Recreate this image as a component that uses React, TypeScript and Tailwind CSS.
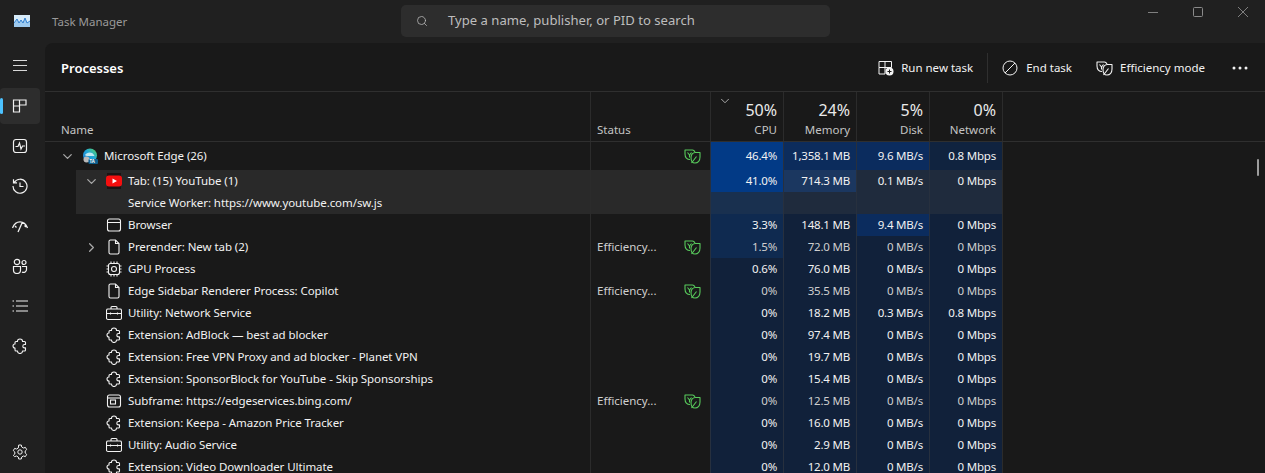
import { Search, ChevronDown, ChevronRight } from 'lucide-react'

const font = '[font-family:"Noto_Sans",sans-serif]'

type Cell = { v: string; bg: string }
type RowData = {
  name: string
  level: number
  icon: string
  chevron?: 'down' | 'right'
  status?: string
  leaf?: boolean
  hover?: boolean
  dim?: boolean
  tall?: boolean
  cells: Cell[]
}

const base = 'bg-[#11213a]'
const hoverBase = 'bg-[#1f2b3d]'

const rows: RowData[] = [
  { name: 'Microsoft Edge (26)', level: 0, icon: 'edge', chevron: 'down', leaf: true, tall: true, cells: [
    { v: '46.4%', bg: 'bg-[#023a86]' }, { v: '1,358.1 MB', bg: 'bg-[#0c2c5c]' }, { v: '9.6 MB/s', bg: 'bg-[#0b2c5e]' }, { v: '0.8 Mbps', bg: 'bg-[#10233f]' },
  ] },
  { name: 'Tab: (15) YouTube (1)', level: 1, icon: 'youtube', chevron: 'down', hover: true, cells: [
    { v: '41.0%', bg: 'bg-[#023a86]' }, { v: '714.3 MB', bg: 'bg-[#1b3760]' }, { v: '0.1 MB/s', bg: hoverBase }, { v: '0 Mbps', bg: hoverBase },
  ] },
  { name: 'Service Worker: https://www.youtube.com/sw.js', level: 2, icon: '', hover: true, cells: [
    { v: '', bg: 'bg-[#19304f]' }, { v: '', bg: hoverBase }, { v: '', bg: hoverBase }, { v: '', bg: hoverBase },
  ] },
  { name: 'Browser', level: 2, icon: 'window', cells: [
    { v: '3.3%', bg: 'bg-[#0f2a50]' }, { v: '148.1 MB', bg: base }, { v: '9.4 MB/s', bg: 'bg-[#0b2c5e]' }, { v: '0 Mbps', bg: base },
  ] },
  { name: 'Prerender: New tab (2)', level: 2, icon: 'file', chevron: 'right', status: 'Efficiency...', leaf: true, dim: true, cells: [
    { v: '1.5%', bg: 'bg-[#0f2a50]' }, { v: '72.0 MB', bg: base }, { v: '0 MB/s', bg: base }, { v: '0 Mbps', bg: base },
  ] },
  { name: 'GPU Process', level: 2, icon: 'chip', cells: [
    { v: '0.6%', bg: base }, { v: '76.0 MB', bg: base }, { v: '0 MB/s', bg: base }, { v: '0 Mbps', bg: base },
  ] },
  { name: 'Edge Sidebar Renderer Process: Copilot', level: 2, icon: 'file', status: 'Efficiency...', leaf: true, dim: true, cells: [
    { v: '0%', bg: base }, { v: '35.5 MB', bg: base }, { v: '0 MB/s', bg: base }, { v: '0 Mbps', bg: base },
  ] },
  { name: 'Utility: Network Service', level: 2, icon: 'case', cells: [
    { v: '0%', bg: base }, { v: '18.2 MB', bg: base }, { v: '0.3 MB/s', bg: base }, { v: '0.8 Mbps', bg: base },
  ] },
  { name: 'Extension: AdBlock — best ad blocker', level: 2, icon: 'puzzle', cells: [
    { v: '0%', bg: base }, { v: '97.4 MB', bg: base }, { v: '0 MB/s', bg: base }, { v: '0 Mbps', bg: base },
  ] },
  { name: 'Extension: Free VPN Proxy and ad blocker - Planet VPN', level: 2, icon: 'puzzle', cells: [
    { v: '0%', bg: base }, { v: '19.7 MB', bg: base }, { v: '0 MB/s', bg: base }, { v: '0 Mbps', bg: base },
  ] },
  { name: 'Extension: SponsorBlock for YouTube - Skip Sponsorships', level: 2, icon: 'puzzle', cells: [
    { v: '0%', bg: base }, { v: '15.4 MB', bg: base }, { v: '0 MB/s', bg: base }, { v: '0 Mbps', bg: base },
  ] },
  { name: 'Subframe: https://edgeservices.bing.com/', level: 2, icon: 'frame', status: 'Efficiency...', leaf: true, dim: true, cells: [
    { v: '0%', bg: base }, { v: '12.5 MB', bg: base }, { v: '0 MB/s', bg: base }, { v: '0 Mbps', bg: base },
  ] },
  { name: 'Extension: Keepa - Amazon Price Tracker', level: 2, icon: 'puzzle', cells: [
    { v: '0%', bg: base }, { v: '16.0 MB', bg: base }, { v: '0 MB/s', bg: base }, { v: '0 Mbps', bg: base },
  ] },
  { name: 'Utility: Audio Service', level: 2, icon: 'case', cells: [
    { v: '0%', bg: base }, { v: '2.9 MB', bg: base }, { v: '0 MB/s', bg: base }, { v: '0 Mbps', bg: base },
  ] },
  { name: 'Extension: Video Downloader Ultimate', level: 2, icon: 'puzzle', cells: [
    { v: '0%', bg: base }, { v: '12.0 MB', bg: base }, { v: '0 MB/s', bg: base }, { v: '0 Mbps', bg: base },
  ] },
]

function Leaf({ className, stroke }: { className?: string; stroke: string }) {
  return (
    <svg viewBox="0 0 17 15" className={className} fill="none" stroke={stroke} strokeWidth="1.100" strokeLinejoin="round">
      <path d="M6 10.500C3 10.500 1 8.500 1 5V1h7.500C9.500 1 10.500 2 11 3" />
      <path d="M7 8.500C7 5.500 8.800 3.500 11.500 3.500H16V8C16 11.500 14 14 11 14 8.500 14 7 11.500 7 8.500Z" />
      <path d="M3.500 3.500 5.500 6 7.500 3.500M5.500 6V8.500M7.500 14 12.500 7.500" />
    </svg>
  )
}

function Puzzle({ className }: { className?: string }) {
  return (
    <svg viewBox="0 0 16 16" className={className} fill="none" stroke="#f2f2f2" strokeWidth="1.100" strokeLinejoin="round">
      <path d="M5.500 3.200C5.500 1.800 6.600 1 8 1s2.500.8 2.500 2.200v.3h2A1 1 0 0 1 13.500 4.500v2h-1a1.700 1.700 0 0 0 0 3.400h1V12a1 1 0 0 1-1 1h-2v.3c0 1.300-1.100 2.200-2.500 2.200s-2.500-.9-2.500-2.200V13H4a1 1 0 0 1-1-1V10C1.800 10 1 9.200 1 8s.8-2 2-2V4.500a1 1 0 0 1 1-1h1.500Z" />
    </svg>
  )
}

function RowIcon({ kind }: { kind: string }) {
  const common = { viewBox: '0 0 16 16', className: 'w-4 h-4', fill: 'none', stroke: '#f2f2f2', strokeWidth: 1.1 }
  if (kind === 'edge') {
    return (
      <svg viewBox="0 0 16 16" className="w-4 h-4">
        <defs>
          <linearGradient id="edgeg" x1="0" y1="1" x2="1" y2="0">
            <stop offset="0" stopColor="#1f6fd0" />
            <stop offset="0.55" stopColor="#1fa8d8" />
            <stop offset="1" stopColor="#5fd65a" />
          </linearGradient>
        </defs>
        <circle cx="8" cy="7.500" r="7" fill="url(#edgeg)" />
        <path d="M3 7C5 3.500 11 3.500 12.500 8H6C4.500 8 3.500 7.800 3 7Z" fill="#bfe8f0" />
        <circle cx="4.500" cy="11.500" r="3" fill="#b9b9b9" />
        <rect x="6.500" y="11" width="9.500" height="5" rx="1" fill="#0d5e8c" />
        <text x="7.600" y="15.200" fontSize="4.400" fontWeight="700" fill="#fff" fontFamily="Noto Sans">TA</text>
      </svg>
    )
  }
  if (kind === 'youtube') {
    return (
      <svg viewBox="0 0 16 16" className="w-4 h-4">
        <rect x="1" y="0" width="14" height="16" fill="#1c1414" />
        <rect x="0" y="2.500" width="16" height="11" rx="3" fill="#f50f0f" />
        <path d="M6.500 5.500v5L11 8Z" fill="#fff" />
      </svg>
    )
  }
  if (kind === 'window') {
    return (
      <svg {...common}>
        <rect x="1.500" y="2" width="13" height="12" rx="2" />
        <path d="M1.500 5.500h13" />
      </svg>
    )
  }
  if (kind === 'file') {
    return (
      <svg {...common}>
        <path d="M3 2.500A1.500 1.500 0 0 1 4.500 1h5l3.500 3.500v9A1.500 1.500 0 0 1 11.500 15h-7A1.500 1.500 0 0 1 3 13.500Z" />
        <path d="M9.500 1v3.500H13" />
      </svg>
    )
  }
  if (kind === 'chip') {
    return (
      <svg {...common}>
        <rect x="2.500" y="2.500" width="11" height="11" rx="2" />
        <circle cx="8" cy="8" r="2.500" />
        <path d="M5 .5v2M8 .5v2M11 .5v2M5 13.500v2M8 13.500v2M11 13.500v2M.5 5h2M.5 8h2M.5 11h2M13.500 5h2M13.500 8h2M13.500 11h2" />
      </svg>
    )
  }
  if (kind === 'case') {
    return (
      <svg {...common}>
        <rect x="0.500" y="4" width="15" height="10.500" rx="1.500" />
        <path d="M5 4V2.500A1 1 0 0 1 6 1.500h4a1 1 0 0 1 1 1V4M.5 8.500h15M4.500 7.500v2M11.500 7.500v2" />
      </svg>
    )
  }
  if (kind === 'frame') {
    return (
      <svg {...common}>
        <rect x="1.500" y="2" width="13" height="12" rx="2" />
        <path d="M1.500 5h13" />
        <rect x="4.500" y="7" width="5" height="4" />
      </svg>
    )
  }
  if (kind === 'puzzle') {
    return <Puzzle className="w-4 h-4" />
  }
  return <span className="w-4 h-4" />
}

function Row({ row }: { row: RowData }) {
  const cellText = row.dim ? 'text-[#cfcfcf]' : 'text-[#f2f2f2]'
  return (
    <div className={`flex ${row.tall ? 'h-[28px]' : 'h-[22px]'} text-[11.5px] text-[#f2f2f2]`}>
      <div className={`w-[545px] flex ${row.level === 0 ? 'pl-[7px]' : 'pl-[31px]'}`}>
        <div className={`flex-1 flex items-center tracking-[-0.07px] ${row.hover ? 'bg-[#292929]' : ''}`}>
          <span className="w-[30px] flex justify-center text-[#a8a8a8]">
            {row.chevron === 'down' && <ChevronDown size={15} strokeWidth={2} />}
            {row.chevron === 'right' && <ChevronRight size={15} strokeWidth={2} />}
          </span>
          <span className="w-[22px] flex shrink-0"><RowIcon kind={row.icon} /></span>
          <span className="whitespace-nowrap">{row.name}</span>
        </div>
      </div>
      <div className={`w-[120px] flex items-center justify-between pl-[6px] pr-[9px] border-l border-[#2b2b2b] ${row.hover ? 'bg-[#292929]' : ''}`}>
        <span className="text-[#cfcfcf]">{row.status}</span>
        {row.leaf && <Leaf className="w-[17px] h-[15px]" stroke="#58cb5c" />}
      </div>
      {row.cells.map((c, i) => (
        <div key={i} className={`w-[73px] flex items-center justify-end pr-[6px] tracking-[-0.2px] border-l border-[#27303e] ${c.bg} ${cellText} whitespace-nowrap`}>
          {c.v}
        </div>
      ))}
      <div className="border-l border-[#2b2b2b]" />
    </div>
  )
}

function HeadCol({ pct, label, sorted }: { pct: string; label: string; sorted?: boolean }) {
  return (
    <div className="relative w-[73px] flex flex-col items-end justify-end pr-[6px] pb-[1px] border-l border-[#2b2b2b]">
      {sorted && <ChevronDown size={14} strokeWidth={1.500} className="absolute left-[7px] top-[2px] text-[#bdbdbd]" />}
      <span className="-mb-[1px] text-[16px] leading-[22px] text-[#eaeaea]">{pct}</span>
      <span className="text-[11.5px] leading-[20px] text-[#c4c4c4]">{label}</span>
    </div>
  )
}

function SideItem({ active, children }: { active?: boolean; children: React.ReactNode }) {
  return (
    <div className={`relative h-[36px] w-[40px] flex items-center justify-center rounded-[4px] ${active ? 'bg-[#2d2d2d]' : ''}`}>
      {active && <span className="absolute left-0 top-[10px] w-[3px] h-[16px] rounded bg-[#4cc2ff]" />}
      {children}
    </div>
  )
}

const sideIcon = { viewBox: '0 0 16 16', className: 'w-4 h-4', fill: 'none', stroke: '#f2f2f2', strokeWidth: 1.200 }

export default function App() {
  return (
    <div className={`relative h-[473px] w-[1265px] overflow-hidden bg-[#202020] ${font}`}>
      {/* title bar */}
      <div className="h-[43px] flex items-start">
        <div className="w-[45px] pt-[15px] pl-[14px]">
          <svg viewBox="0 0 16 12" className="w-4 h-3 block">
            <rect width="16" height="12" fill="#d7ebf9" />
            <path d="M0 8 3 4 5 8 7 5 9 8 11 3 13 8 16 6V12H0Z" fill="#9cc9ee" />
            <path d="M0 8 3 4 5 8 7 5 9 8 11 3 13 8 16 6" fill="none" stroke="#2f7fd0" strokeWidth="1" />
          </svg>
        </div>
        <span className="w-[356px] pl-[7px] pt-[13px] text-[11.5px] leading-[18px] text-[#9a9a9a]">Task Manager</span>
        <div className="mt-[5px] w-[429px] h-[32px] rounded-[5px] bg-[#2d2d2d] flex items-center pl-[15px]">
          <Search size={12} strokeWidth={1.500} className="text-[#bdbdbd]" />
          <span className="ml-[20px] pb-[1px] text-[13.1px] text-[#bdbdbd]">Type a name, publisher, or PID to search</span>
        </div>
        <div className="ml-auto flex items-center gap-[35px] pr-[17px] pt-[7px]">
          <svg viewBox="0 0 10 10" className="w-[10px] h-[10px]" stroke="#7f7f7f"><path d="M0 5.500h10" /></svg>
          <svg viewBox="0 0 10 10" className="w-[10px] h-[10px]" fill="none" stroke="#8a8a8a"><rect x=".5" y=".5" width="9" height="9" rx="1" /></svg>
          <svg viewBox="0 0 10 10" className="w-[10px] h-[10px]" stroke="#7f7f7f"><path d="M0 0 10 10M10 0 0 10" /></svg>
        </div>
      </div>
      <div className="flex">
        {/* sidebar */}
        <div className="w-[45px] shrink-0 h-[430px] flex flex-col relative">
          <div className="h-[45px] flex items-center pl-[13px]">
            <svg viewBox="0 0 14 11" className="w-[14px] h-[11px]" stroke="#d8d8d8"><path d="M0 .5h14M0 5.500h14M0 10.500h14" /></svg>
          </div>
          <SideItem active>
            <svg {...sideIcon}><path d="M1.500 2h6v6h-6ZM7.500 2h6.500v5H7.500M1.500 8h6v6h-6Z" /></svg>
          </SideItem>
          <div className="flex flex-col gap-[4px] mt-[4px]">
            <SideItem>
              <svg {...sideIcon}><rect x="1.500" y="1.500" width="13" height="13" rx="2.500" /><path d="M3.500 8.500H6L7.500 5l1.500 6 1.500-3H13" /></svg>
            </SideItem>
            <SideItem>
              <svg {...sideIcon}><path d="M2.200 4.300A7 7 0 1 1 1 8M1.500 1.200V4.800H5M8 4.500V8.500h3.500" /></svg>
            </SideItem>
            <SideItem>
              <svg {...sideIcon} strokeWidth={1.300}><path d="M.5 10C2 6 5 3.800 8 3.800s6 2.200 7.500 6.200M10.500 4 6 14M3 8l1.500 1.500M12.500 7.500 14 9" /></svg>
            </SideItem>
            <SideItem>
              <svg {...sideIcon}><circle cx="5" cy="4" r="2.700" /><circle cx="12" cy="4.500" r="2" /><path d="M1.500 8.500h7V12a3.500 3.500 0 0 1-7 0ZM10 8.500h4.500V11A3 3 0 0 1 10 14" /></svg>
            </SideItem>
            <SideItem>
              <svg {...sideIcon}><path d="M4 3h12M4 8h12M4 13h12M.5 3h1.500M.5 8h1.500M.5 13h1.500" /></svg>
            </SideItem>
            <SideItem>
              <Puzzle className="w-4 h-4" />
            </SideItem>
          </div>
          <div className="absolute left-[12px] top-[401px]">
            <svg {...sideIcon} strokeWidth={1}><circle cx="8" cy="8" r="2.200" /><path d="M6.700 1h2.600l.4 2 1.700 1 2-.6 1.300 2.200-1.500 1.400v2l1.500 1.400-1.300 2.200-2-.6-1.700 1-.4 2H6.700l-.4-2-1.700-1-2 .6L1.300 11.400l1.500-1.400v-2L1.300 6.600 2.600 4.400l2 .6 1.700-1Z" /></svg>
          </div>
        </div>
        {/* main panel */}
        <div className="flex-1 h-[430px] bg-[#191919] rounded-tl-[8px] overflow-hidden">
          <div className="h-[49px] flex items-center border-b border-[#2f2f2f]">
            <h1 className="pl-[16px] pt-[3px] text-[13px] font-semibold text-white">Processes</h1>
            <div className="ml-auto flex items-center text-[11.5px] text-[#f2f2f2] pt-[2px]">
              <svg viewBox="0 0 16 16" className="w-4 h-4" fill="none" stroke="#f2f2f2">
                <path d="M1 1.500h6v6H1ZM7 1.500h6.500v6H7M1 7.500h6v6.500H1Z" />
                <circle cx="11.500" cy="11.500" r="4" fill="#f2f2f2" stroke="none" />
                <path d="M11.500 9.500v4M9.500 11.500h4" stroke="#191919" />
              </svg>
              <span className="ml-[7px]">Run new task</span>
              <span className="w-px h-[30px] bg-[#2f2f2f] mx-[14px]" />
              <svg viewBox="0 0 16 16" className="w-4 h-4" fill="none" stroke="#f2f2f2">
                <circle cx="8" cy="8" r="7" /><path d="M3 13 13 3" />
              </svg>
              <span className="ml-[8px]">End task</span>
              <Leaf className="ml-[24px] w-[17px] h-[15px]" stroke="#f2f2f2" />
              <span className="ml-[7px]">Efficiency mode</span>
              <svg viewBox="0 0 16 4" className="ml-[27px] mr-[17px] w-4 h-1" fill="#f2f2f2">
                <circle cx="2" cy="2" r="1.500" /><circle cx="8" cy="2" r="1.500" /><circle cx="14" cy="2" r="1.500" />
              </svg>
            </div>
          </div>
          {/* header */}
          <div className="h-[50px] flex border-b border-[#2f2f2f] text-[11.5px] text-[#c4c4c4]">
            <div className="w-[545px] flex items-end pl-[16px] pb-[1px] leading-[20px]">Name</div>
            <div className="w-[120px] flex items-end pl-[6px] pb-[1px] leading-[20px] border-l border-[#2b2b2b]">Status</div>
            <HeadCol pct="50%" label="CPU" sorted />
            <HeadCol pct="24%" label="Memory" />
            <HeadCol pct="5%" label="Disk" />
            <HeadCol pct="0%" label="Network" />
            <div className="border-l border-[#2b2b2b]" />
          </div>
          {rows.map((r) => <Row key={r.name} row={r} />)}
        </div>
      </div>
      {/* scrollbar thumb */}
      <div className="absolute left-[1257px] top-[159px] w-[2px] h-[17px] rounded bg-[#9d9d9d]" />
    </div>
  )
}
